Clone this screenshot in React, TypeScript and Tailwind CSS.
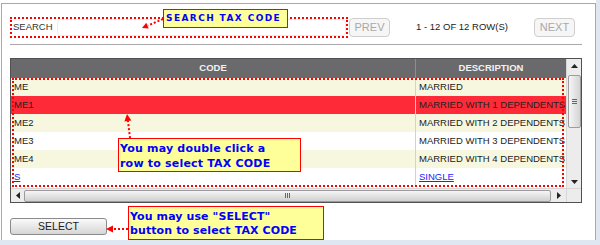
import React from 'react';

type Row = { code: string; desc: string; bg: string; link?: boolean };

const rows: Row[] = [
  { code: 'ME', desc: 'MARRIED', bg: 'bg-[#f7f7df]' },
  { code: 'ME1', desc: 'MARRIED WITH 1 DEPENDENTS', bg: 'bg-[#ff2a37]' },
  { code: 'ME2', desc: 'MARRIED WITH 2 DEPENDENTS', bg: 'bg-[#f7f7df]' },
  { code: 'ME3', desc: 'MARRIED WITH 3 DEPENDENTS', bg: 'bg-white' },
  { code: 'ME4', desc: 'MARRIED WITH 4 DEPENDENTS', bg: 'bg-[#f7f7df]' },
  { code: 'S', desc: 'SINGLE', bg: 'bg-white', link: true },
];

const Callout: React.FC<{ className: string; children: React.ReactNode }> = ({ className, children }) => (
  <div
    className={`absolute border border-[#ff0000] bg-[#ffff99] text-[#0000ff] font-bold font-['DejaVu_Sans',Verdana,sans-serif] ${className}`}
  >
    {children}
  </div>
);

export default function App() {
  return (
    <div className="w-[600px] h-[245px] overflow-hidden bg-white flex flex-col font-['Liberation_Sans',Arial,sans-serif] text-[#222]">
      <div className="h-[3px] flex shrink-0">
        <div className="w-[596px] bg-white" />
        <div className="flex-1 bg-[#dfe8f2]" />
      </div>
      <div className="flex flex-1">
        <div className="w-px bg-white" />
        {/* Panel */}
        <div className="relative w-[595px] border-l border-t border-r border-[#a9a9a9] pl-[8px] pt-[13px]">
          {/* Search bar */}
          <div className="flex items-center h-[21px]">
            <div className="w-[338px] h-[21px] border-2 border-dotted border-[#ff0000] flex items-center">
              <span className="text-[9.5px] text-[#333] ml-[1px]">SEARCH</span>
              <div className="ml-[4px] w-[290px] h-[17px] border border-[#ececec] rounded-sm bg-white" />
            </div>
            <button className="ml-[1px] w-[41px] h-[19px] border border-[#cfcfcf] rounded-sm bg-[#f6f6f6] text-[#a9a9a9] text-[11px] leading-none">
              PREV
            </button>
            <div className="w-[144px] text-center text-[9.5px] text-[#222]">1 - 12 OF 12 ROW(S)</div>
            <button className="w-[41px] h-[19px] border border-[#cfcfcf] rounded-sm bg-[#f6f6f6] text-[#a9a9a9] text-[11px] leading-none">
              NEXT
            </button>
          </div>

          <div className="mt-[6px] w-[572px] h-px bg-[#a9a9a9]" />

          {/* Grid */}
          <div className="mt-[13px] w-[572px] h-[145px] border border-[#505050] flex flex-col bg-white">
            <div className="flex h-[129px]">
              <div className="w-[555px] flex flex-col overflow-hidden">
                <div className="h-[19px] flex bg-[#6a696b] text-[#f2f2f2] text-[9.5px] font-bold shrink-0">
                  <div className="w-[404px] flex items-center justify-center">CODE</div>
                  <div className="w-px bg-[#8e8d8f]" />
                  <div className="flex-1 flex items-center justify-center">DESCRIPTION</div>
                </div>
                <div className="h-[110px] overflow-hidden">
                  {rows.map((r) => (
                    <div key={r.code} className={`flex h-[18px] text-[9.5px] ${r.bg}`}>
                      <div className={`w-[404px] pl-[3px] flex items-center ${r.link ? 'text-[#2323ff] underline' : ''}`}>
                        {r.code}
                      </div>
                      <div className="w-px bg-[#d3d3c6]" />
                      <div className={`flex-1 pl-[3px] flex items-center whitespace-nowrap ${r.link ? 'text-[#2323ff] underline' : ''}`}>
                        {r.desc}
                      </div>
                    </div>
                  ))}
                </div>
              </div>
              {/* Vertical scrollbar */}
              <div className="w-[15px] bg-[#ececec] border-l border-[#d6d6d6] flex flex-col items-center">
                <div className="h-[13px] flex items-center justify-center">
                  <svg width="7" height="4" viewBox="0 0 7 4"><path d="M3.5 0 L7 4 L0 4 Z" fill="#222" /></svg>
                </div>
                <div className="mt-[3px] w-[13px] h-[53px] rounded-[2px] border border-[#9c9c9c] bg-gradient-to-r from-[#f6f6f6] to-[#d4d4d4] flex flex-col items-center justify-center gap-[1px]">
                  <div className="w-[5px] h-px bg-[#666]" />
                  <div className="w-[5px] h-px bg-[#666]" />
                  <div className="w-[5px] h-px bg-[#666]" />
                </div>
                <div className="flex-1" />
                <div className="h-[13px] flex items-center justify-center">
                  <svg width="7" height="4" viewBox="0 0 7 4"><path d="M0 0 L7 0 L3.5 4 Z" fill="#222" /></svg>
                </div>
              </div>
            </div>
            {/* Horizontal scrollbar */}
            <div className="flex h-[14px] border-t border-[#d6d6d6]">
              <div className="w-[555px] bg-[#ececec] flex items-center">
                <div className="w-[13px] flex items-center justify-center">
                  <svg width="4" height="7" viewBox="0 0 4 7"><path d="M0 3.5 L4 0 L4 7 Z" fill="#222" /></svg>
                </div>
                <div className="w-[527px] h-[12px] rounded-[2px] border border-[#9c9c9c] bg-gradient-to-b from-[#f6f6f6] to-[#d0d0d0] flex items-center justify-center gap-[1px]">
                  <div className="w-px h-[5px] bg-[#666]" />
                  <div className="w-px h-[5px] bg-[#666]" />
                  <div className="w-px h-[5px] bg-[#666]" />
                </div>
                <div className="flex-1 flex items-center justify-center">
                  <svg width="4" height="7" viewBox="0 0 4 7"><path d="M4 3.5 L0 0 L0 7 Z" fill="#222" /></svg>
                </div>
              </div>
              <div className="flex-1 bg-[#ececec] border-l border-[#d6d6d6]" />
            </div>
          </div>

          {/* Select */}
          <button className="mt-[15px] w-[97px] h-[17px] rounded-[3px] border border-[#8a8a8a] bg-gradient-to-b from-[#fafafa] to-[#d6d6d6] text-[10.5px] text-[#222] leading-none">
            SELECT
          </button>

          {/* Annotations */}
          <div className="absolute left-[10px] top-[74px] w-[552px] h-[109px] border-2 border-dotted border-[#ff0000] pointer-events-none" />

          <Callout className="left-[161px] top-[5px] w-[125px] h-[19px] pl-[2px] text-[9px] tracking-[1.4px] flex items-center">
            SEARCH TAX CODE
          </Callout>
          <Callout className="left-[116px] top-[134px] w-[183px] h-[34px] pl-[1px] pt-[2px] text-[11px] tracking-[0.2px] leading-[15px]">
            You may double click a<br />row to select TAX CODE
          </Callout>
          <Callout className="left-[126px] top-[202px] w-[196px] h-[34px] pl-[1px] pt-[3px] text-[11px] tracking-[0.1px] leading-[14px]">
            You may use "SELECT"<br />button to select TAX CODE
          </Callout>

          <svg className="absolute left-0 top-0 pointer-events-none" width="594" height="238">
            <line x1="161" y1="15" x2="146" y2="21.5" stroke="#ff0000" strokeWidth="2" strokeDasharray="2 2" />
            <polygon points="140,24 146.7,24.4 144.3,18.8" fill="#ff0000" />
            <line x1="128" y1="134" x2="126" y2="117" stroke="#ff0000" strokeWidth="2" strokeDasharray="2 2" />
            <polygon points="125,110 129.4,116.5 122.4,117.4" fill="#ff0000" />
            <line x1="126" y1="225" x2="110" y2="225" stroke="#ff0000" strokeWidth="2" strokeDasharray="2 2" />
            <polygon points="104,225 111,221.5 111,228.5" fill="#ff0000" />
          </svg>
        </div>
        <div className="flex-1 bg-[#dfe8f2]" />
      </div>
      <div className="h-[5px] shrink-0 bg-[#dfe8f2]" />
    </div>
  );
}
